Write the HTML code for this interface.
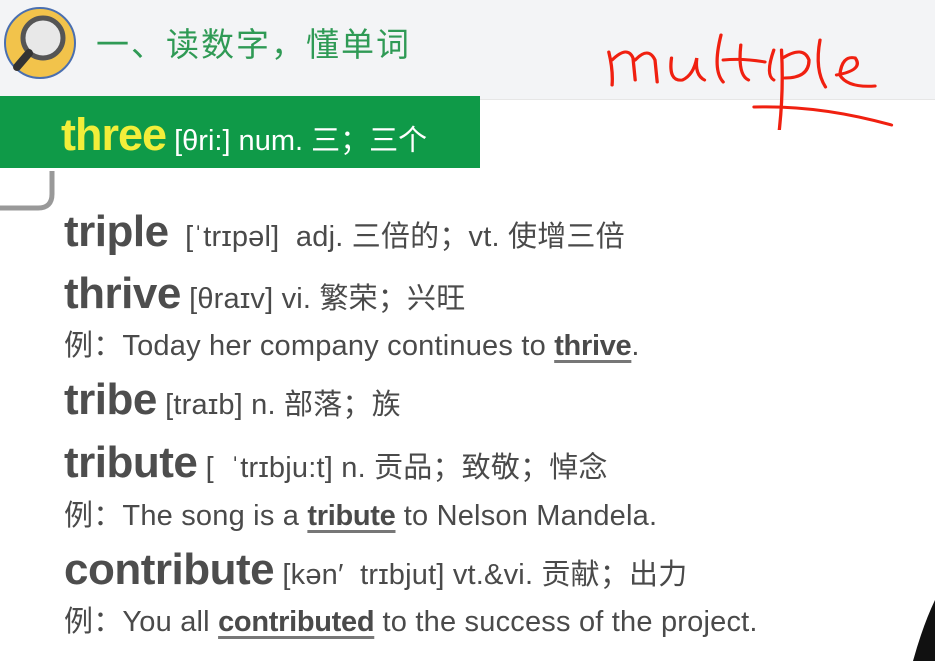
<!DOCTYPE html>
<html><head><meta charset="utf-8"><style>
body{margin:0;width:935px;height:661px;overflow:hidden;background:#fff;position:relative;font-family:"Liberation Sans","Noto Sans CJK SC",sans-serif;color:#4a4a4a}
.hdr{position:absolute;left:0;top:0;width:935px;height:99px;background:#f3f4f6;border-bottom:1px solid #e6e6e6}
.t{position:absolute;left:96px;top:26px;font-size:33px;line-height:1;color:#2f9a55;font-family:"Noto Sans CJK SC",sans-serif;letter-spacing:2px;white-space:nowrap}
.bar{position:absolute;left:0;top:96px;width:480px;height:72px;background:#0f9a48;color:#fff}
.bar span{position:absolute;left:61px;top:16px;font-size:29px;line-height:1;white-space:nowrap}
.bar b{color:#f2ee3a;font-size:45px;letter-spacing:-1px}
.l{position:absolute;left:64px;white-space:nowrap;font-size:29px;line-height:1;color:#4a4a4a;letter-spacing:0.2px}
.l b{font-size:44px;color:#4d4d4d;letter-spacing:-0.5px}
.e{font-size:29px}
.e u{font-weight:bold;text-decoration-thickness:3px;text-underline-offset:5px;text-decoration-color:#777;letter-spacing:-0.3px}
</style></head><body>
<div class="hdr"></div>
<svg style="position:absolute;left:3px;top:5px" width="74" height="76" viewBox="0 0 74 76">
<circle cx="37" cy="38" r="35" fill="#f2c34b" stroke="#4a6fb0" stroke-width="2"/>
<circle cx="40" cy="33" r="20" fill="#e8e8e8" stroke="#555" stroke-width="5"/>
<line x1="26" y1="48" x2="14" y2="62" stroke="#333" stroke-width="8" stroke-linecap="round"/>
</svg>
<div class="t">一、读数字，懂单词</div>
<svg style="position:absolute;left:600px;top:30px" width="330" height="100" viewBox="0 0 300 100" preserveAspectRatio="none">
<g fill="none" stroke="#f02010" stroke-width="3" stroke-linecap="round">
<path d="M8 22 Q12 40 11 55 M11 30 Q25 15 30 28 L32 50 M32 30 Q44 16 50 30 L52 52"/>
<path d="M65 28 Q62 52 75 50 Q85 45 88 28 Q86 45 95 50"/>
<path d="M110 5 Q102 40 112 52"/>
<path d="M128 15 Q125 45 135 50 M112 30 Q130 28 150 32"/>
<path d="M158 20 Q150 45 158 50"/>
<path d="M165 20 Q167 60 163 100 M166 28 Q185 15 190 30 Q190 48 168 48"/>
<path d="M200 10 Q195 40 205 57"/>
<path d="M215 45 Q240 40 232 28 Q220 25 218 45 Q225 58 250 56"/>
<path d="M140 77 Q200 75 265 95"/>
</g></svg>
<div class="bar"><span><b>three</b> [θri:] num. 三；三个</span></div>
<svg style="position:absolute;left:0;top:166px" width="60" height="48"><path d="M0 42 L38 42 Q52 42 52 28 L52 5" fill="none" stroke="#999" stroke-width="5"/></svg>
<div class="l" style="top:210px"><b>triple</b> &nbsp;[ˈtrɪpəl]&nbsp; adj. 三倍的；vt. 使增三倍</div>
<div class="l" style="top:272px"><b>thrive</b> [θraɪv] vi. 繁荣；兴旺</div>
<div class="l e" style="top:332px">例：Today her company continues to <u>thrive</u>.</div>
<div class="l" style="top:378px"><b>tribe</b> [traɪb] n. 部落；族</div>
<div class="l" style="top:441px"><b>tribute</b> [ &nbsp;ˈtrɪbju:t] n. 贡品；致敬；悼念</div>
<div class="l e" style="top:502px">例：The song is a <u>tribute</u> to Nelson Mandela.</div>
<div class="l" style="top:548px"><b>contribute</b> [kən′ &nbsp;trɪbjut] vt.&amp;vi. 贡献；出力</div>
<div class="l e" style="top:608px">例：You all <u>contributed</u> to the success of the project.</div>
<svg style="position:absolute;left:905px;top:600px" width="30" height="61"><path d="M30 0 L30 61 L8 61 Q18 25 30 0Z" fill="#111"/></svg>
</body></html>
